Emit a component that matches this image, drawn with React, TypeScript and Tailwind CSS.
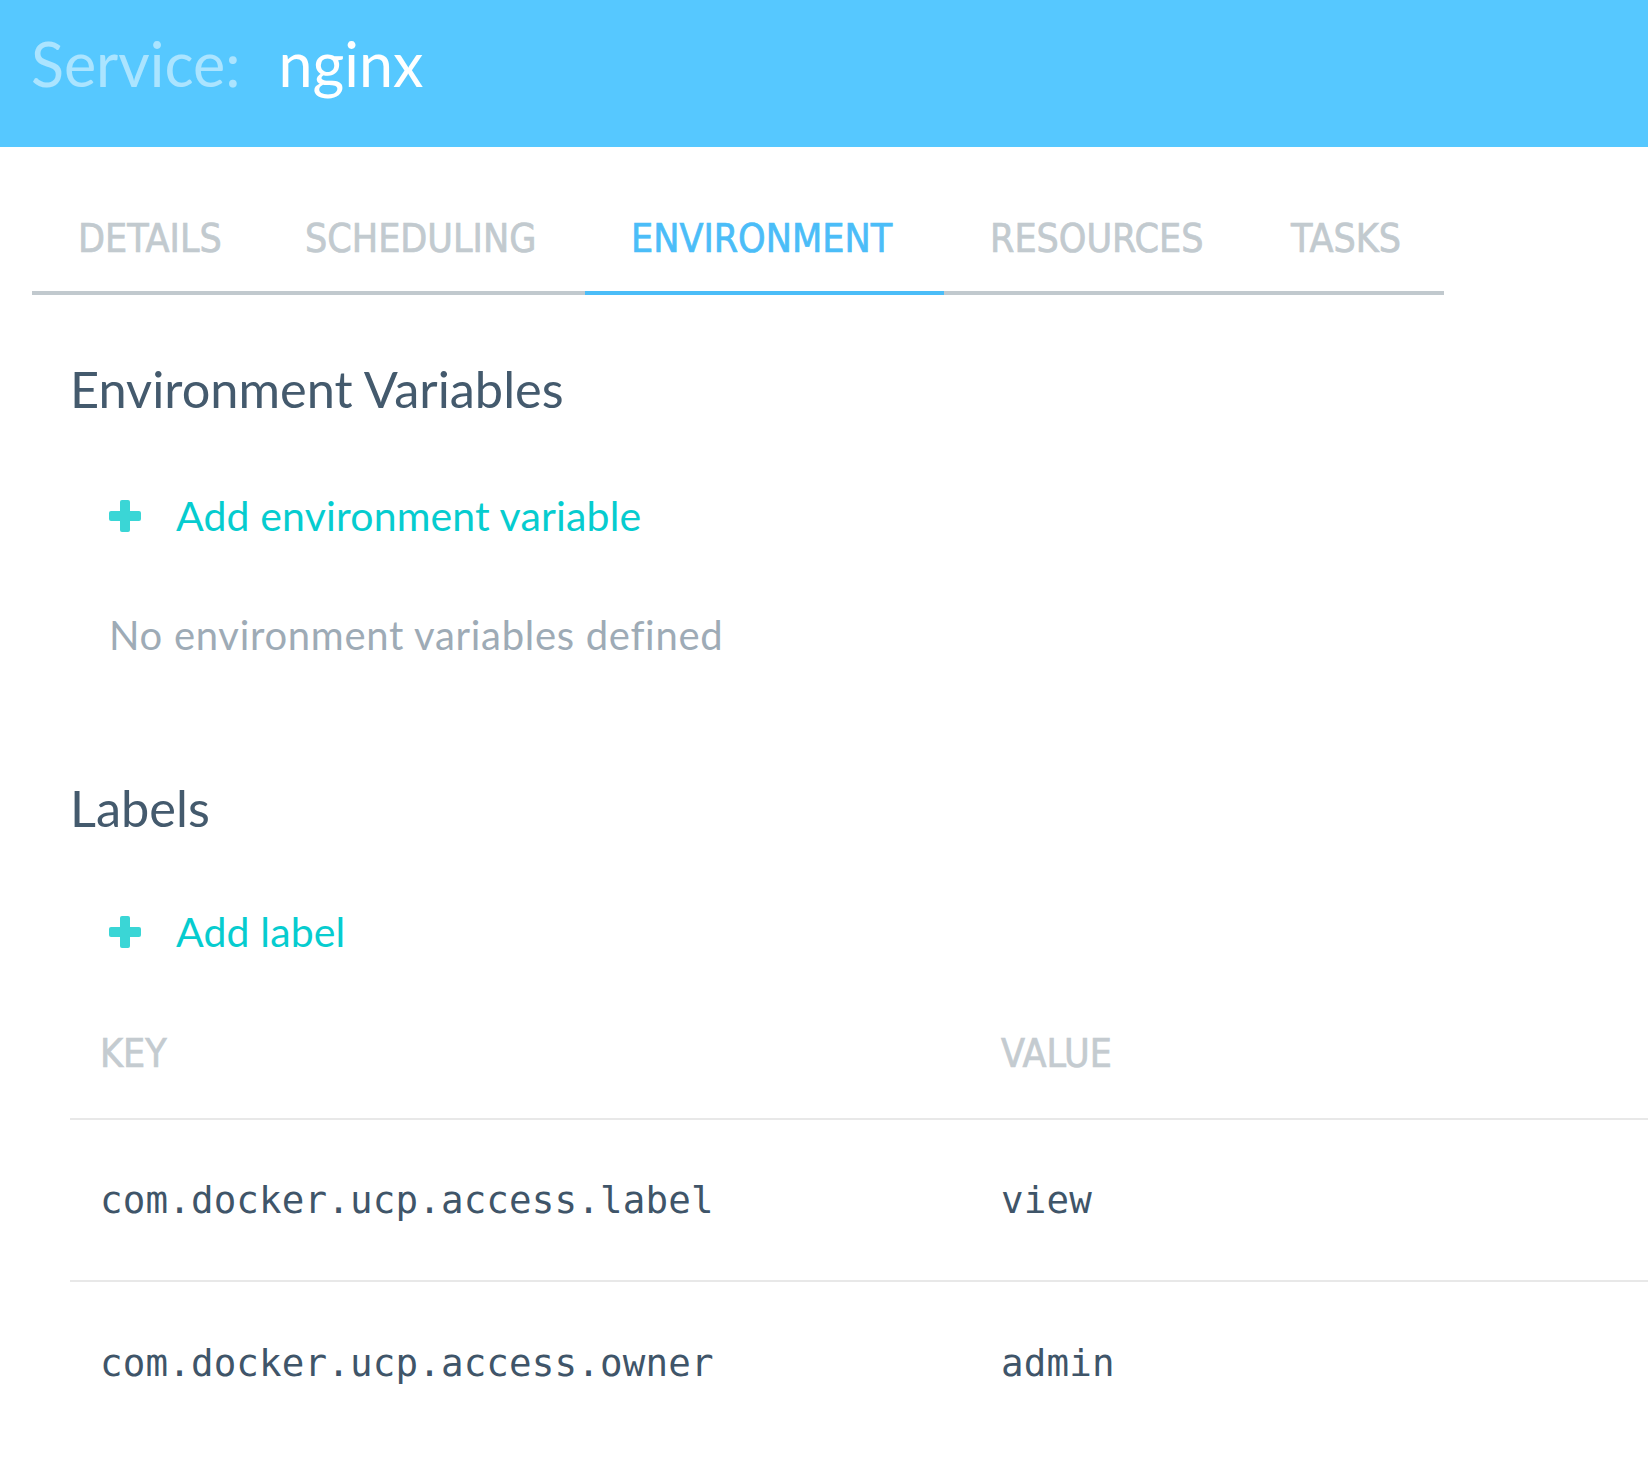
import React from "react";

// Thick rounded plus used by the "add" links
const PlusIcon = () => (
    <svg width="32" height="32" viewBox="0 0 32 32" className="shrink-0">
        <rect x="11" y="0" width="10" height="32" rx="2" fill="#3ad6d6" />
        <rect x="0" y="11" width="32" height="10" rx="2" fill="#3ad6d6" />
    </svg>
);

const tabs = [
    { name: "DETAILS", width: "w-[227px]" },
    { name: "SCHEDULING", width: "w-[326px]" },
    { name: "ENVIRONMENT", width: "w-[359px]" },
    { name: "RESOURCES", width: "w-[301px]" },
    { name: "TASKS", width: "w-[199px]" },
];
const activeTab = "ENVIRONMENT";

const labels = [
    { key: "com.docker.ucp.access.label", value: "view" },
    { key: "com.docker.ucp.access.owner", value: "admin" },
];

// narrow caps font with a little extra weight, like the tab / table header font
const condensed = "font-['Liberation_Sans_Narrow','DejaVu_Sans_Condensed',sans-serif] [-webkit-text-stroke:0.7px_currentColor]";

function AddLink({ text }: { text: string }) {
    return (
        <div className="ml-[39px] flex items-center gap-[35px]">
            <PlusIcon />
            <span className="text-[41px] leading-[50px] tracking-[0.15px] text-[#06cccf]">{text}</span>
        </div>
    );
}

export default function App() {
    return (
        <div className="min-h-screen bg-white font-['Lato',sans-serif]">
            {/* header */}
            <div className="h-[147px] bg-[#56c8ff] pl-[31px] pt-[28px]">
                <h1 className="flex gap-[38px] text-[61px] leading-[72px]">
                    <span className="text-[#abe4ff]">Service:</span>
                    <span className="text-white">nginx</span>
                </h1>
            </div>

            {/* tabs */}
            <div className="ml-[32px] mt-[69px] flex w-[1412px] border-b-4 border-[#c1c9ce]">
                {tabs.map((tab) => {
                    const active = tab.name === activeTab;
                    return (
                        <div
                            key={tab.name}
                            className={
                                condensed +
                                " -mb-[4px] border-b-4 pl-[46px] pb-[30px] text-[39px] leading-[45px] whitespace-nowrap " +
                                tab.width +
                                (active ? " border-[#4bbdf8] text-[#4bbdf8]" : " border-transparent text-[#c2cacf]")
                            }
                        >
                            {tab.name}
                        </div>
                    );
                })}
            </div>

            <div className="pl-[70px]">
                {/* environment variables */}
                <h2 className="mt-[64px] text-[50.5px] leading-[60px] text-[#445a6d]">Environment Variables</h2>
                <div className="mt-[72px]">
                    <AddLink text="Add environment variable" />
                </div>
                <p className="ml-[39px] mt-[70px] text-[40px] leading-[48px] tracking-[0.7px] text-[#9eabb6]">
                    No environment variables defined
                </p>

                {/* labels */}
                <h2 className="mt-[119px] text-[50.5px] leading-[60px] text-[#445a6d]">Labels</h2>
                <div className="mt-[69px]">
                    <AddLink text="Add label" />
                </div>

                <div className="mt-[74px]">
                    <div className={condensed + " grid grid-cols-[901px_1fr] border-b-2 border-[#e8e8e8] pb-[42px] text-[39px] leading-[45px] text-[#c4cbd0]"}>
                        <div className="pl-[30px]">KEY</div>
                        <div className="pl-[30px]">VALUE</div>
                    </div>
                    {labels.map((label, i) => (
                        <div
                            key={label.key}
                            className={
                                "grid h-[162px] grid-cols-[901px_1fr] items-center font-['DejaVu_Sans_Mono',monospace] text-[37.5px] tracking-[0.15px] text-[#3f5569] " +
                                (i < labels.length - 1 ? "border-b-2 border-[#e8e8e8]" : "")
                            }
                        >
                            <div className="pl-[30px]">{label.key}</div>
                            <div className="pl-[30px]">{label.value}</div>
                        </div>
                    ))}
                </div>
            </div>
        </div>
    );
}
